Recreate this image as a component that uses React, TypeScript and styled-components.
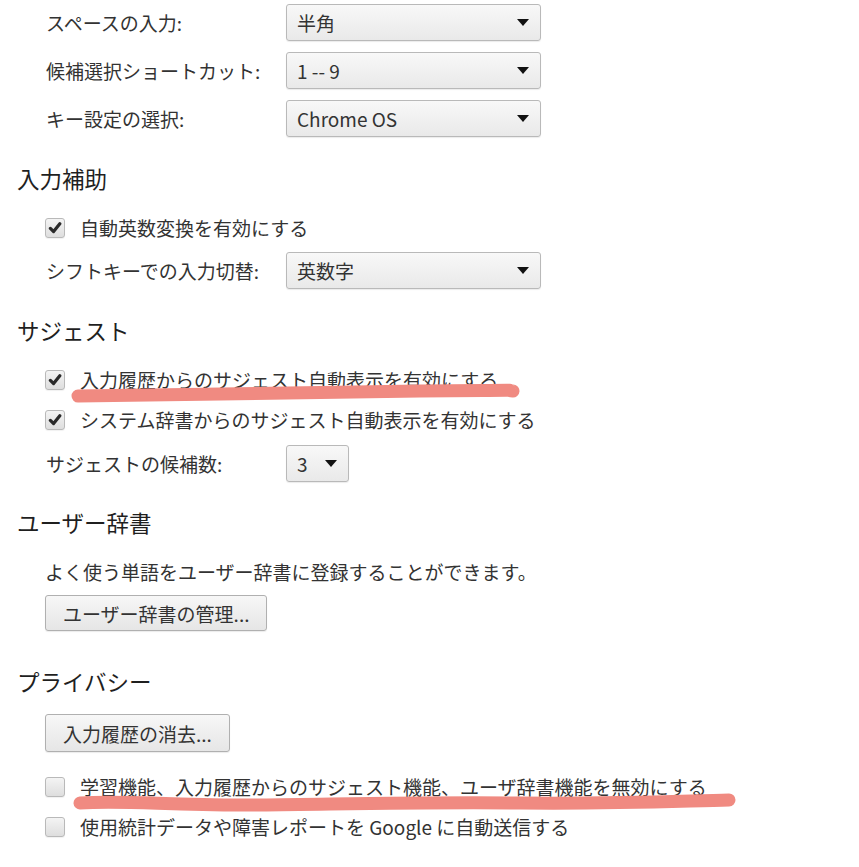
import styled, { createGlobalStyle } from "styled-components";

const GlobalStyle = createGlobalStyle`
  html, body {
    margin: 0;
    padding: 0;
    background: #fff;
  }
  body {
    font-family: "Noto Sans CJK JP", "Noto Sans", sans-serif;
    color: #333;
  }
`;

const Page = styled.div`
  position: relative;
  box-sizing: border-box;
  width: 859px;
  height: 867px;
  overflow: hidden;
  padding: 4px 0 0 17px;
`;

const Heading = styled.div<{ $top: number }>`
  margin-top: ${({ $top }) => $top}px;
  font-size: 22.5px;
  line-height: 30px;
  color: #1f1f1f;
`;

const Body = styled.div`
  display: flex;
  flex-direction: column;
  align-items: flex-start;
  padding-left: 28px;
`;

const Row = styled.div<{ $top?: number }>`
  display: flex;
  align-items: center;
  margin-top: ${({ $top }) => $top ?? 0}px;
  font-size: 19px;
  line-height: 30px;
`;

const Label = styled.div`
  box-sizing: border-box;
  width: 241px;
  padding-left: 1px;
  white-space: nowrap;
`;

const Select = styled.div<{ $width: number }>`
  box-sizing: border-box;
  width: ${({ $width }) => $width}px;
  height: 37px;
  display: flex;
  align-items: center;
  justify-content: space-between;
  padding: 0 11px 0 10px;
  border: 1px solid #b9b9b9;
  border-radius: 3px;
  background: linear-gradient(#f8f8f8, #e9e9e9);
  box-shadow: 0 1px 1px rgba(0, 0, 0, 0.08);
  font-size: 19px;
  color: #333;
`;

const Arrow = styled.span`
  width: 0;
  height: 0;
  border-left: 6px solid transparent;
  border-right: 6px solid transparent;
  border-top: 7px solid #111;
`;

const CheckRow = styled(Row)`
  gap: 15px;
`;

const Box = styled.span`
  box-sizing: border-box;
  width: 20px;
  height: 20px;
  display: flex;
  align-items: center;
  justify-content: center;
  border: 1px solid #b9b9b9;
  border-radius: 3px;
  background: linear-gradient(#f4f4f4, #dedede);
  box-shadow: 0 1px 1px rgba(0, 0, 0, 0.06);
`;

const Button = styled.div<{ $top: number; $height: number }>`
  box-sizing: border-box;
  height: ${({ $height }) => $height}px;
  margin-top: ${({ $top }) => $top}px;
  display: flex;
  align-items: center;
  padding: 0 17px;
  border: 1px solid #b0b0b0;
  border-radius: 3px;
  background: linear-gradient(#f7f7f7, #e6e6e6);
  box-shadow: 0 1px 1px rgba(0, 0, 0, 0.08);
  font-size: 19px;
  color: #333;
  white-space: nowrap;
`;

const Scribble = styled.svg`
  position: absolute;
  left: 0;
  top: 0;
  pointer-events: none;
`;

const Check = ({ on }: { on: boolean }) => (
  <Box>
    {on && (
      <svg width="14" height="14" viewBox="0 0 14 14">
        <path
          d="M2.4 7.4 L5.6 10.6 L11.8 2.8"
          fill="none"
          stroke="#2a2a2a"
          strokeWidth="3.2"
          strokeLinecap="round"
          strokeLinejoin="round"
        />
      </svg>
    )}
  </Box>
);

const SelectRow = ({
  label,
  value,
  width = 255,
  top = 0,
}: {
  label: string;
  value: string;
  width?: number;
  top?: number;
}) => (
  <Row $top={top}>
    <Label>{label}</Label>
    <Select $width={width}>
      <span>{value}</span>
      <Arrow />
    </Select>
  </Row>
);

const CheckItem = ({ on, text, top }: { on: boolean; text: string; top: number }) => (
  <CheckRow $top={top}>
    <Check on={on} />
    <span>{text}</span>
  </CheckRow>
);

export default function App() {
  return (
    <Page>
      <GlobalStyle />
      <Body>
        <SelectRow label="スペースの入力:" value="半角" />
        <SelectRow label="候補選択ショートカット:" value="1 -- 9" top={11} />
        <SelectRow label="キー設定の選択:" value="Chrome OS" top={11} />
      </Body>

      <Heading $top={26}>入力補助</Heading>
      <Body>
        <CheckItem on text="自動英数変換を有効にする" top={20} />
        <SelectRow label="シフトキーでの入力切替:" value="英数字" top={9} />
      </Body>

      <Heading $top={26}>サジェスト</Heading>
      <Body>
        <CheckItem on text="入力履歴からのサジェスト自動表示を有効にする" top={20} />
        <CheckItem on text="システム辞書からのサジェスト自動表示を有効にする" top={10} />
        <SelectRow label="サジェストの候補数:" value="3" width={63} top={10} />
      </Body>

      <Heading $top={25}>ユーザー辞書</Heading>
      <Body>
        <Row $top={20}>よく使う単語をユーザー辞書に登録することができます。</Row>
        <Button $top={8} $height={36}>ユーザー辞書の管理...</Button>
      </Body>

      <Heading $top={35}>プライバシー</Heading>
      <Body>
        <Button $top={18} $height={38}>入力履歴の消去...</Button>
        <CheckItem
          on={false}
          text="学習機能、入力履歴からのサジェスト機能、ユーザ辞書機能を無効にする"
          top={20}
        />
        <CheckItem
          on={false}
          text="使用統計データや障害レポートを Google に自動送信する"
          top={10}
        />
      </Body>

      <Scribble width="859" height="867" viewBox="0 0 859 867">
        <path
          d="M78 396 C 180 395, 300 392, 420 391 S 500 390, 513 391"
          fill="none"
          stroke="#f08a81"
          strokeWidth="13"
          strokeLinecap="round"
        />
        <path
          d="M80 803 C 130 800, 170 806, 260 805 S 420 802, 520 803 S 680 801, 729 800"
          fill="none"
          stroke="#f08a81"
          strokeWidth="13"
          strokeLinecap="round"
        />
      </Scribble>
    </Page>
  );
}
